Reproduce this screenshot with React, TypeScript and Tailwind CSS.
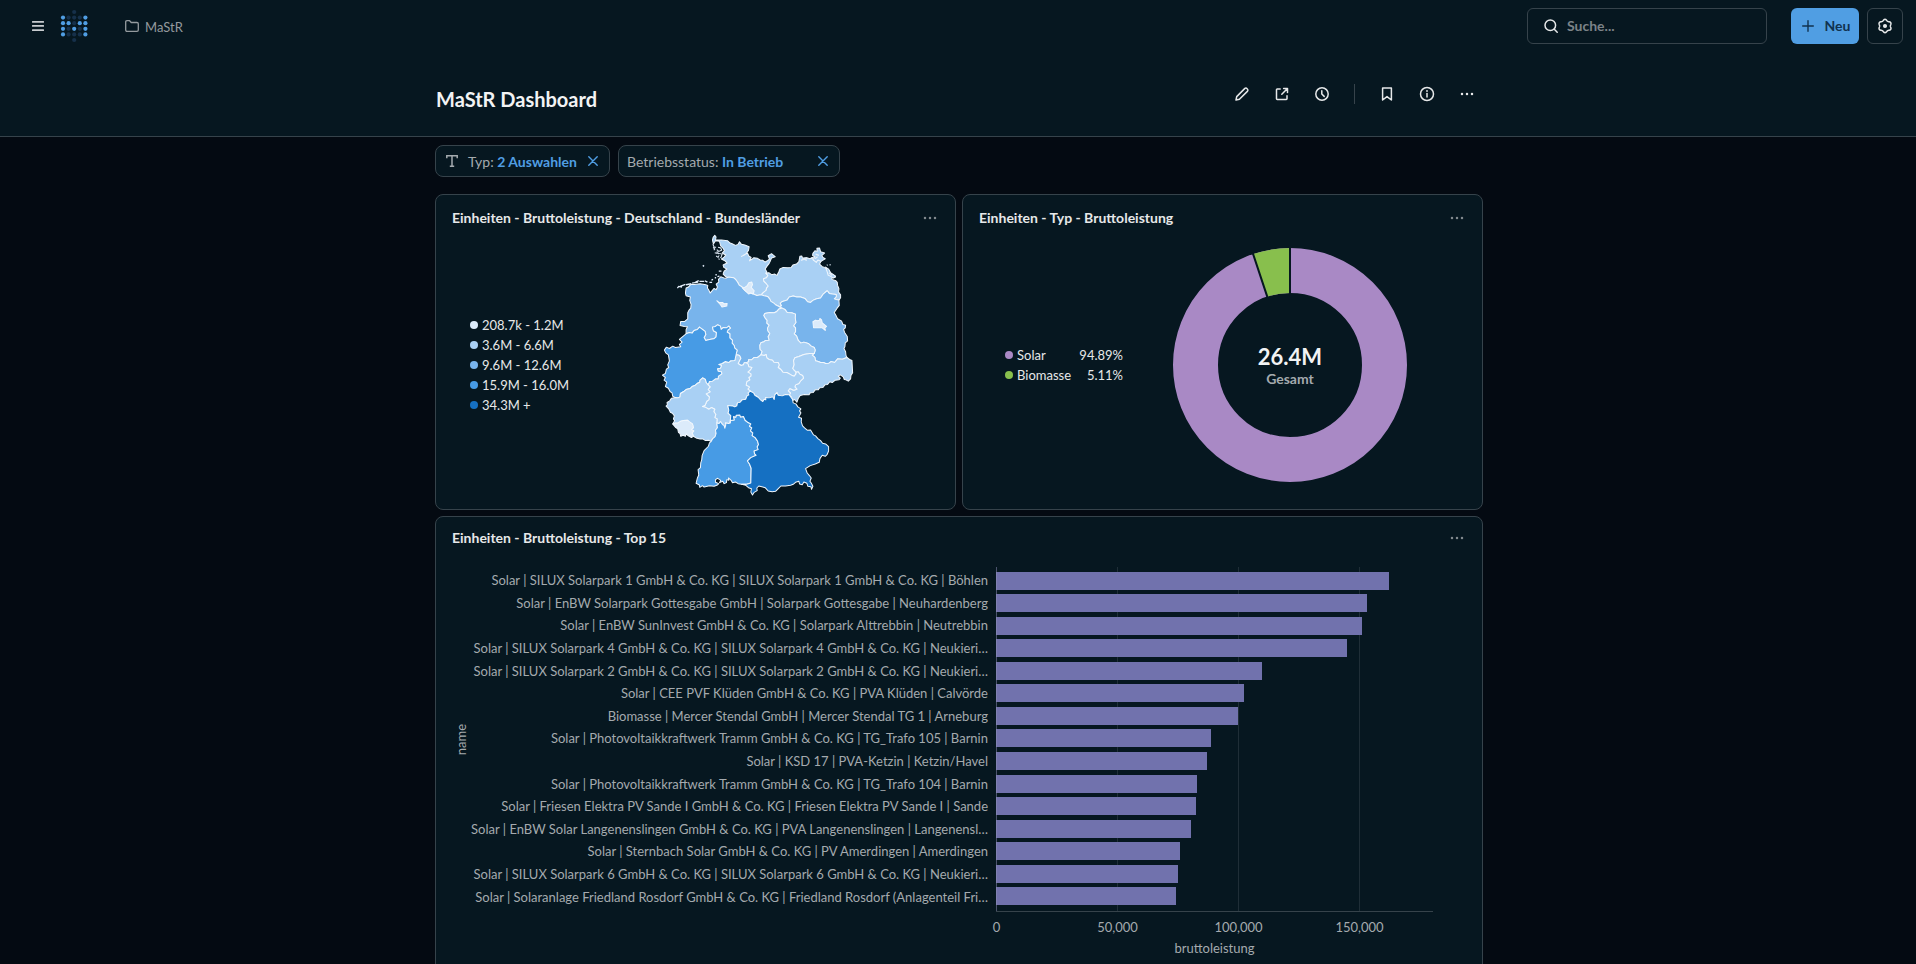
import React from "react";

type Pt = [number, number];

function arc(s: string): Pt[] {
  return s.split(" ").map((p) => p.split(",").map(Number) as Pt);
}

/* Border lines of the federal states, shared between neighbours. */
const arcs: Record<string, Pt[]> = {
  shCoast: arc(
    "250,157 240,158 228,155 219,146 222,137 230,131 221,126 219,119 231,113 224,106 214,101 222,95 227,89 216,83 223,76 219,69 212,62 208,48 196,46 190,56 187,44 189,36 194,30 198,35 196,44 214,44 232,46 240,53 246,55 256,60 264,57 268,49 274,57 284,59 297,64 295,75 287,86 274,93 284,88 292,83 296,92 303,96 298,106 306,101 311,97 322,99 330,104 338,105 345,110 353,105 358,101 354,91 364,85 375,94 364,98 360,108 357,114 350,123 345,131 350,140 347,143",
  ),
  shMv: arc("347,143 353,150 349,157 340,160 341,167 347,173 354,182 349,188 348,195 340,201 333,208"),
  shNi: arc("250,157 257,163 262,170 267,179 275,184 284,195 298,203 310,206 320,210 333,208"),
  niMv: arc("333,208 342,211 352,213 359,221 362,228 371,233 376,238 388,244"),
  mvCoast: arc(
    "347,143 356,142 364,148 374,146 380,150 386,139 389,131 399,126 412,127 423,126 428,119 439,116 446,109 449,93 455,92 457,99 470,97 479,100 486,96 490,104 498,108 503,102 513,106 508,116 516,124 524,126 531,134 538,138 541,147 551,150 556,155 545,158 545,162 557,166 561,171 562,180 566,190 565,200 571,208 571,217 566,224",
  ),
  mvBb: arc("388,244 394,241 390,233 397,228 411,224 417,215 429,212 440,215 451,215 464,219 472,229 481,231 488,225 499,220 511,218 518,207 531,196 537,204 546,206 558,207 558,214 552,220 558,222 566,224"),
  niBb: arc("388,244 396,248"),
  niSt: arc("396,248 386,251 380,258 372,262 358,261 344,264 341,270 346,279 351,285 350,293 357,299 352,308 353,316 359,324 354,334 357,344 346,345 341,349 332,352 329,360 330,372 336,378 332,388"),
  stBb: arc("396,248 404,252 411,261 424,262 436,266 435,277 437,291 430,301 436,307 436,318 432,325 439,331 444,345 452,353 461,350 474,354 483,362 492,366 495,374 492,384"),
  bbEast: arc("566,224 567,240 560,249 552,261 558,272 562,280 574,287 578,297 586,299 585,307 580,312 583,321 591,333 592,346 585,352 584,363 581,369 586,379 587,389 590,396"),
  bbSn: arc("492,384 486,389 494,396 496,406 504,408 511,411 520,411 526,414 536,413 543,408 553,411 562,400 576,401 590,396"),
  snEast: arc(
    "590,396 598,402 605,405 607,442 602,450 601,460 594,467 587,463 582,462 579,454 570,448 564,452 570,458 566,463 555,464 546,471 538,469 532,477 524,478 518,486 508,487 504,493 495,493 489,501 480,502 476,508 462,507 450,510 444,519 440,530 433,522 427,525 424,515 417,508",
  ),
  snTh: arc("417,508 421,503 414,496 419,489 430,494 440,491 434,484 436,478 446,474 452,465 460,458 457,450 449,446 444,439 438,440 437,446"),
  snSt: arc("437,446 438,440 432,434 428,429 432,417 430,406 434,397 446,393 461,387 478,384 492,384"),
  stTh: arc("332,388 342,390 348,387 350,397 357,402 367,404 371,410 384,411 387,418 384,426 392,432 398,440 410,441 424,449 432,452 437,446"),
  niTh: arc("332,388 322,396 312,396 304,403 295,403 296,409 288,412"),
  heTh: arc("288,412 294,416 296,424 305,426 300,434 293,440 302,445 302,452 296,456 299,463 290,468 288,479 298,484 293,491 301,497"),
  thBy: arc("301,497 310,502 314,509 324,515 330,522 338,528 342,521 347,523 346,516 357,517 368,514 372,522 374,508 380,501 384,509 396,511 406,507 417,508"),
  niHe: arc("258,387 268,390 272,398 268,406 264,414 273,420 280,418 282,412 288,412"),
  niNrw: arc("108,325 118,321 126,323 132,315 142,312 148,305 157,312 165,318 167,327 162,336 167,345 178,342 191,340 198,334 199,321 190,316 187,305 196,303 202,298 211,302 213,312 220,306 229,307 236,302 241,308 234,313 231,320 239,325 239,337 247,345 246,353 252,360 254,368 261,374 258,387"),
  niCoast: arc(
    "250,157 236,155 225,159 212,154 205,162 206,170 198,176 202,185 198,193 192,189 185,197 180,203 176,194 172,188 173,180 167,178 150,175 133,177 122,177 115,185 108,188 106,203 108,211 121,215 119,225 123,237 122,248 117,254 113,262 113,280 104,288 92,288 90,300 103,303 112,304 108,313 108,325",
  ),
  nrwWest: arc("108,325 97,334 88,342 96,350 88,357 92,364 76,366 68,362 58,369 49,365 43,374 47,382 55,388 58,406 53,418 56,426 49,431 46,444 37,449 46,456 42,464 50,470 46,483 55,488 60,498 66,502 68,512 77,517 84,517"),
  nrwRp: arc("84,517 90,514 91,504 101,498 108,492 120,489 126,483 134,480 141,474 149,470 150,464 158,457 166,462 168,471 174,478"),
  nrwHe: arc("174,478 178,468 187,467 196,460 204,460 205,452 215,445 214,439 204,437 202,430 211,428 214,420 206,417 216,414 226,408 236,411 241,406 254,405 256,396 258,387"),
  heRp: arc("174,478 180,484 174,492 180,499 168,505 178,515 176,523 170,527 165,539 157,543 168,546 176,551 184,546 194,551 191,558 197,567 194,576 201,580 200,592"),
  rpWest: arc("84,517 77,516 64,518 59,526 51,531 52,538 48,542 56,550 61,560 67,563 73,571 70,580 74,585 68,595"),
  saarRp: arc("68,595 77,592 82,593 90,588 100,585 112,584 118,589 127,595 130,606 124,612 131,616 126,622 130,632"),
  saarWest: arc("68,595 76,605 83,610 85,620 90,624 92,632 99,629 106,632 108,625 115,631 124,636 130,632"),
  rpSouth: arc("130,632 138,637 150,640 158,640 166,645 176,644 183,648"),
  rpBw: arc("183,648 188,639 195,633 198,623 196,614 202,606 200,592"),
  heBw: arc("200,592 207,594 211,588 217,597 222,600 224,608 227,598 226,592 236,594 240,592"),
  heBy: arc("240,592 241,580 242,570 234,563 236,554 233,540 247,541 254,544 260,541 262,532 270,530 276,523 287,521 290,512 296,508 294,502 301,497"),
  bwBy: arc("240,592 241,585 252,583 250,573 257,575 258,569 269,568 271,574 280,573 285,584 294,591 302,595 298,602 305,607 301,616 308,622 306,630 315,636 322,646 325,657 321,664 324,672 312,676 313,684 318,689 302,696 292,706 298,715 303,728 302,772 290,776 274,776"),
  bwWest: arc(
    "183,648 178,652 175,662 162,675 156,690 155,702 152,712 151,726 144,732 146,748 142,757 138,773 148,778 149,785 157,780 162,784 178,780 192,782 202,778 206,774 196,770 196,762 203,758 212,764 208,771 218,767 222,774 229,771 230,762 236,764 235,757 243,764 247,771 256,769 264,774 274,776",
  ),
  bySouth: arc(
    "274,776 287,779 295,786 304,789 302,799 307,808 312,800 321,795 320,787 326,781 338,784 345,786 354,796 366,798 376,797 385,788 392,781 406,781 421,779 429,776 436,770 446,767 448,775 456,777 461,769 470,773 473,782 482,783 484,791 488,782 483,772 479,767 483,757 477,749 471,742 466,729 480,720 495,715 507,710 509,699 516,689 525,692 531,686 535,676 535,663 526,655 517,653 511,645 503,639 496,631 490,628 481,613 471,614 463,607 457,601 453,589 454,578 445,575 452,562 448,556 452,550 443,544 437,535 429,532 427,522 417,508",
  ),
};

type Step = string; // a leading "-" walks the line backwards

function outline(steps: Step[]): string {
  const pts = steps.flatMap((s) => (s[0] === "-" ? [...arcs[s.slice(1)]].reverse() : arcs[s]));
  return "M" + pts.map((p) => p.join(" ")).join("L") + "Z";
}

const C1 = "#dcebfa";
const C2 = "#a9d0f4";
const C3 = "#78b4ec";
const C4 = "#479be5";
const C5 = "#1570c2";

const states: { name: string; fill: string; steps: Step[] }[] = [
  { name: "Schleswig-Holstein", fill: C2, steps: ["shCoast", "shMv", "-shNi"] },
  { name: "Mecklenburg-Vorpommern", fill: C2, steps: ["mvCoast", "-mvBb", "-niMv", "-shMv"] },
  { name: "Niedersachsen", fill: C3, steps: ["shNi", "niMv", "niBb", "niSt", "niTh", "-niHe", "-niNrw", "-niCoast"] },
  { name: "Brandenburg", fill: C3, steps: ["mvBb", "bbEast", "-bbSn", "-stBb", "-niBb"] },
  { name: "Sachsen-Anhalt", fill: C2, steps: ["stBb", "-snSt", "-stTh", "-niSt"] },
  { name: "Sachsen", fill: C2, steps: ["snSt", "bbSn", "snEast", "snTh"] },
  { name: "Thüringen", fill: C2, steps: ["stTh", "-snTh", "-thBy", "-heTh", "-niTh"] },
  { name: "Hessen", fill: C2, steps: ["niHe", "heTh", "-heBy", "-heBw", "-heRp", "nrwHe"] },
  { name: "Nordrhein-Westfalen", fill: C4, steps: ["niNrw", "-nrwHe", "-nrwRp", "-nrwWest"] },
  { name: "Rheinland-Pfalz", fill: C2, steps: ["nrwRp", "heRp", "-rpBw", "-rpSouth", "-saarRp", "-rpWest"] },
  { name: "Saarland", fill: C1, steps: ["saarRp", "-saarWest"] },
  { name: "Baden-Württemberg", fill: C4, steps: ["rpBw", "heBw", "bwBy", "-bwWest"] },
  { name: "Bayern", fill: C5, steps: ["heBy", "thBy", "-bySouth", "-bwBy"] },
];

function GermanyMap() {
  return (
    <svg viewBox="30 20 590 800" className="mt-[3px] h-[267px] w-[197px]" role="img" aria-label="Deutschland">
      <g stroke="#f1f7fd" strokeWidth="3" strokeLinejoin="round">
        {states.map((s) => (
          <path key={s.name} d={outline(s.steps)} fill={s.fill} />
        ))}
        <g fill={C1}>
          <path d="M276 187L284 186L291 181L296 172L305 170L307 178L303 186L312 196L309 206L300 202L296 206L287 198Z" />
          <path d="M200 226L207 231L217 231L222 235L231 234L230 242L216 245L211 238Z" />
          <path d="M488 289L496 284L502 286L508 284L509 279L514 283L516 292L529 303L524 307L525 315L516 307L490 307Z" />
        </g>
        <g fill={C2} strokeWidth="3">
          <path d="M488 84L494 76L501 78L500 69L508 68L511 79L523 83L515 90L518 96L525 100L512 108L503 104L498 111L488 103L494 94L487 90Z" />
          <path d="M526 125L535 131L541 142L556 152L550 158L540 152L534 150L531 140Z" />
        </g>
      </g>
      <g fill="none" stroke="#e3eefa" strokeWidth="4">
        <path d="M82 188l4-5 10 2M90 183l16-6M108 178l16-3M126 173l18-3M136 170l10-4M148 168l14 0M164 166l8 4M178 171l8 0M184 164l5-2M194 157l4 0M196 148l4 0M202 154l6-2M206 137l8 0M158 120l4 3" />
        <path d="M188 57l4 8 6 1M189 66l5 5-3 3M204 66l8 2 3 8M200 73l6 5 10-4M194 82l7 2 0-6M198 92l6 4 3-6M208 84l8 3-3 8M203 82l4 4M210 96l6 3M205 100l4 2" strokeWidth="3" />
        <path d="M452 105l10-4 8 4M482 100l10-6M494 100l8-6M530 120l2-2M538 118l3 0M496 86l10 4M536 142l10 8M458 99l12-1" />
      </g>
    </svg>
  );
}

function Logo() {
  const rows = ["  .  ", "#...#", "##.##", "#.#.#", "#...#", "  .  "];
  return (
    <svg viewBox="0 0 28 34" className="h-[34px] w-7" aria-hidden="true">
      {rows.flatMap((r, y) =>
        [...r].map((c, x) =>
          c === " " ? null : (
            <circle
              key={x + "-" + y}
              cx={3 + x * 5.6}
              cy={3 + y * 5.6}
              r="2.1"
              fill={c === "#" ? "#509ee3" : "#16304a"}
            />
          ),
        ),
      )}
    </svg>
  );
}

/* Six-lobed cog outline. */
const cogPath =
  "M" +
  Array.from({ length: 72 }, (_, i) => {
    const t = (i * Math.PI) / 36;
    const r = 6 + 0.65 * Math.cos(6 * t);
    return (8 + r * Math.sin(t)).toFixed(2) + " " + (8 - r * Math.cos(t)).toFixed(2);
  }).join("L") +
  "Z";

function Dots({ className }: { className: string }) {
  return (
    <svg viewBox="0 0 16 16" className={className} fill="currentColor" aria-hidden="true">
      <circle cx="3" cy="8" r="1.25" />
      <circle cx="8" cy="8" r="1.25" />
      <circle cx="13" cy="8" r="1.25" />
    </svg>
  );
}

function Icon({ children }: { children: React.ReactNode }) {
  return (
    <svg
      viewBox="0 0 16 16"
      className="size-4"
      fill="none"
      stroke="currentColor"
      strokeWidth="1.5"
      strokeLinecap="round"
      strokeLinejoin="round"
      aria-hidden="true"
    >
      {children}
    </svg>
  );
}

function ToolButton({ label, children }: { label: string; children: React.ReactNode }) {
  return (
    <button aria-label={label} className="flex size-8 items-center justify-center">
      {children}
    </button>
  );
}

function Card({
  title,
  className,
  headerClassName = "pt-3",
  children,
}: {
  title: string;
  className: string;
  headerClassName?: string;
  children: React.ReactNode;
}) {
  return (
    <section className={"flex flex-col rounded-lg border border-[#36434b] bg-[#061720] " + className}>
      <header className={"flex items-center justify-between pr-[17px] pl-4 " + headerClassName}>
        <h2 className="text-sm leading-[22px] font-bold text-[#e6e8e9]">{title}</h2>
        <button aria-label="Menü" className="text-[#81898e]">
          <Dots className="size-4" />
        </button>
      </header>
      {children}
    </section>
  );
}

function FilterChip({ label, value, className, icon }: { label: string; value: string; className: string; icon?: React.ReactNode }) {
  return (
    <div className={"flex h-8 items-center rounded-lg border border-[#36434b] bg-[#061720] text-sm " + className}>
      {icon}
      <button className="flex-1 pt-px text-left whitespace-nowrap text-[#a4aaae]">
        {label}: <span className="font-bold text-[#509ee3]">{value}</span>
      </button>
      <button aria-label={label + " entfernen"} className="text-[#509ee3]">
        <svg viewBox="0 0 10 10" className="size-2.5" stroke="currentColor" strokeWidth="1.4" strokeLinecap="round" aria-hidden="true">
          <path d="M.8 .8L9.2 9.2M9.2 .8L.8 9.2" />
        </svg>
      </button>
    </div>
  );
}

const mapLegend: [string, string][] = [
  ["bg-[#dcebfa]", "208.7k - 1.2M"],
  ["bg-[#a9d0f4]", "3.6M - 6.6M"],
  ["bg-[#78b4ec]", "9.6M - 12.6M"],
  ["bg-[#479be5]", "15.9M - 16.0M"],
  ["bg-[#1570c2]", "34.3M +"],
];

function Donut() {
  const a = (-0.0511 * 360 * Math.PI) / 180;
  const at = (r: number) => `${117 + r * Math.sin(a)} ${117 - r * Math.cos(a)}`;
  return (
    <svg viewBox="0 0 234 234" className="col-start-1 row-start-1 size-[234px]" aria-hidden="true">
      <circle cx="117" cy="117" r="94.5" fill="none" stroke="#a989c5" strokeWidth="45" />
      <path d={`M117 0A117 117 0 0 0 ${at(117)}L${at(72)}A72 72 0 0 1 117 45Z`} fill="#88bf4d" />
      <path d={`M117 -2V47M${at(119)}L${at(70)}`} stroke="#061720" strokeWidth="2" />
    </svg>
  );
}

const bars: [string, number][] = [
  ["Solar | SILUX Solarpark 1 GmbH & Co. KG | SILUX Solarpark 1 GmbH & Co. KG | Böhlen", 162300],
  ["Solar | EnBW Solarpark Gottesgabe GmbH | Solarpark Gottesgabe | Neuhardenberg", 153200],
  ["Solar | EnBW SunInvest GmbH & Co. KG | Solarpark Alttrebbin | Neutrebbin", 151200],
  ["Solar | SILUX Solarpark 4 GmbH & Co. KG | SILUX Solarpark 4 GmbH & Co. KG | Neukieri…", 144900],
  ["Solar | SILUX Solarpark 2 GmbH & Co. KG | SILUX Solarpark 2 GmbH & Co. KG | Neukieri…", 109800],
  ["Solar | CEE PVF Klüden GmbH & Co. KG | PVA Klüden | Calvörde", 102400],
  ["Biomasse | Mercer Stendal GmbH | Mercer Stendal TG 1 | Arneburg", 99900],
  ["Solar | Photovoltaikkraftwerk Tramm GmbH & Co. KG | TG_Trafo 105 | Barnin", 88800],
  ["Solar | KSD 17 | PVA-Ketzin | Ketzin/Havel", 87100],
  ["Solar | Photovoltaikkraftwerk Tramm GmbH & Co. KG | TG_Trafo 104 | Barnin", 83000],
  ["Solar | Friesen Elektra PV Sande I GmbH & Co. KG | Friesen Elektra PV Sande I | Sande", 82600],
  ["Solar | EnBW Solar Langenenslingen GmbH & Co. KG | PVA Langenenslingen | Langenensl…", 80500],
  ["Solar | Sternbach Solar GmbH & Co. KG | PV Amerdingen | Amerdingen", 76000],
  ["Solar | SILUX Solarpark 6 GmbH & Co. KG | SILUX Solarpark 6 GmbH & Co. KG | Neukieri…", 75100],
  ["Solar | Solaranlage Friedland Rosdorf GmbH & Co. KG | Friedland Rosdorf (Anlagenteil Fri…", 74300],
];

function BarPlot() {
  const scale = 121.1 / 50000;
  return (
    <svg viewBox="0 0 437 345" className="block h-[345px] w-[437px]" shapeRendering="crispEdges" aria-hidden="true">
      <g fill="#1f2e37">
        {[121, 242, 363].map((x) => (
          <rect key={x} x={x} y="0" width="1" height="344" />
        ))}
      </g>
      {bars.map(([name, v], i) => (
        <rect key={name} x="0" y={Math.floor(5 + i * 22.57)} width={Math.round(v * scale)} height="18" fill="#7172ad" />
      ))}
      <rect x="0" y="0" width="1" height="344" fill="#8f90b8" opacity=".5" />
      <rect x="0" y="344" width="437" height="1" fill="#36434b" />
    </svg>
  );
}

export default function App() {
  return (
    <div className="flex h-screen flex-col overflow-hidden bg-[#040a12] font-['Lato',sans-serif] text-[#e6e8e9]">
      <nav className="flex h-[52px] shrink-0 items-center bg-[#061720] pr-[13px] pl-8">
        <button aria-label="Seitenleiste" className="mr-4">
          <svg viewBox="0 0 12 10" className="h-2.5 w-3" fill="#c8cccf" aria-hidden="true">
            <rect y="0" width="12" height="1.7" rx=".5" />
            <rect y="4.1" width="12" height="1.7" rx=".5" />
            <rect y="8.2" width="12" height="1.7" rx=".5" />
          </svg>
        </button>
        <a href="#" aria-label="Startseite">
          <Logo />
        </a>
        <a href="#" className="ml-[37px] flex items-center gap-1.5 text-[13px] leading-5 text-[#949a9e]">
          <svg viewBox="0 0 14 12" className="h-3 w-3.5" fill="none" stroke="currentColor" strokeWidth="1.3" strokeLinejoin="round" aria-hidden="true">
            <path d="M.7 2Q.7.7 2 .7H4.6L6.2 2.5H12Q13.3 2.5 13.3 3.8V10Q13.3 11.3 12 11.3H2Q.7 11.3.7 10Z" />
          </svg>
          <span className="pt-px">MaStR</span>
        </a>
        <div className="flex-1" />
        <div className="flex h-9 w-60 items-center gap-[9px] rounded-md border border-[#36434b] pl-4">
          <svg viewBox="0 0 14 14" className="size-3.5" fill="none" stroke="#e6e8e9" strokeWidth="1.5" strokeLinecap="round" aria-hidden="true">
            <circle cx="6.3" cy="6.3" r="5.3" />
            <path d="M10.3 10.3L13.2 13.2" />
          </svg>
          <input
            type="search"
            aria-label="Suche"
            placeholder="Suche..."
            className="min-w-0 flex-1 bg-transparent text-sm font-bold outline-none placeholder:text-[#7c8388]"
          />
        </div>
        <button className="ml-6 flex h-9 w-17 items-center justify-center gap-[11px] rounded-md bg-[#509ee3] pl-0.5 text-sm font-bold text-[#10324f]">
          <svg viewBox="0 0 12 12" className="size-3" stroke="currentColor" strokeWidth="1.4" strokeLinecap="round" aria-hidden="true">
            <path d="M6 .7V11.3M.7 6H11.3" />
          </svg>
          Neu
        </button>
        <button aria-label="Einstellungen" className="ml-2 flex size-9 items-center justify-center rounded-md border border-[#36434b]">
          <Icon>
            <path d={cogPath} />
            <circle cx="8" cy="8" r="1.3" fill="currentColor" />
          </Icon>
        </button>
      </nav>

      <header className="h-[85px] shrink-0 border-b border-[#36434b] bg-[#061720] pl-0.5">
        <div className="mx-auto flex max-w-[1048px] justify-between pt-[26px]">
          <h1 className="pt-[7px] pl-px text-xl leading-7 font-bold text-[#f2f3f4]">MaStR Dashboard</h1>
          <div className="flex h-8 items-center gap-2">
            <ToolButton label="Bearbeiten">
              <Icon>
                <path d="M2 14L2.7 10.6L10.9 2.4Q12 1.5 13.2 2.8Q14.5 4 13.6 5.1L5.4 13.3Z" />
              </Icon>
            </ToolButton>
            <ToolButton label="Teilen">
              <Icon>
                <path d="M6.2 3H3.2Q2.5 3 2.5 3.7V12.8Q2.5 13.5 3.2 13.5H12.3Q13 13.5 13 12.8V9.8M9.6 2.5H13.5V6.4M13.2 2.8L7.8 8.2" />
              </Icon>
            </ToolButton>
            <ToolButton label="Zeit">
              <Icon>
                <circle cx="8" cy="8" r="6.2" />
                <path d="M7.8 4.8V8L10.2 10.4" />
              </Icon>
            </ToolButton>
            <div className="mx-2 h-5 w-px bg-[#36434b]" />
            <ToolButton label="Lesezeichen">
              <Icon>
                <path d="M3.6 2H12.4V14L8 10.6L3.6 14Z" />
              </Icon>
            </ToolButton>
            <ToolButton label="Info">
              <Icon>
                <circle cx="8" cy="8" r="6.5" />
                <path d="M8 7.6V11" />
                <path d="M8 4.9V5" strokeWidth="1.8" />
              </Icon>
            </ToolButton>
            <ToolButton label="Mehr">
              <Dots className="size-4" />
            </ToolButton>
          </div>
        </div>
      </header>

      <main className="pl-0.5">
        <div className="mx-auto flex max-w-[1048px] flex-col">
          <div className="flex gap-2 pt-2">
            <FilterChip
              label="Typ"
              value="2 Auswahlen"
              className="w-[175px] pr-[11px] pl-2.5"
              icon={
                <svg viewBox="0 0 12 12" className="mr-2.5 h-3 w-3" fill="none" stroke="#a4aaae" strokeWidth="1.5" aria-hidden="true">
                  <path d="M.8 3.2V.8H11.2V3.2M6 .8V11.2M3.8 11.2H8.2" />
                </svg>
              }
            />
            <FilterChip label="Betriebsstatus" value="In Betrieb" className="w-[222px] pr-[11px] pl-2" />
          </div>

          <div className="mt-[17px] grid grid-cols-2 gap-1.5">
            <Card title="Einheiten - Bruttoleistung - Deutschland - Bundesländer" className="h-[316px]">
              <div className="flex flex-1 items-start pl-[34px]">
                <ul className="flex w-[190px] flex-col pt-[86px]">
                  {mapLegend.map(([bg, text]) => (
                    <li key={text} className="flex h-5 items-center gap-1 text-[13px]">
                      <span className={"size-2 rounded-full " + bg} />
                      <span className="pt-px">{text}</span>
                    </li>
                  ))}
                </ul>
                <GermanyMap />
              </div>
            </Card>

            <Card title="Einheiten - Typ - Bruttoleistung" className="h-[316px]">
              <div className="flex flex-1 items-start pl-[42px]">
                <ul className="flex w-[118px] flex-col pt-[116px]">
                  {[
                    ["bg-[#a989c5]", "Solar", "94.89%"],
                    ["bg-[#88bf4d]", "Biomasse", "5.11%"],
                  ].map(([bg, name, pct]) => (
                    <li key={name} className="flex h-5 items-center gap-1 text-[13px]">
                      <span className={"size-2 rounded-full " + bg} />
                      <span className="flex-1 pt-px">{name}</span>
                      <span className="pt-px">{pct}</span>
                    </li>
                  ))}
                </ul>
                <div className="mt-[19px] ml-[50px] grid place-items-center">
                  <Donut />
                  <div className="col-start-1 row-start-1 pt-1 text-center font-bold">
                    <div className="text-[22px] leading-6 text-[#f2f3f4]">26.4M</div>
                    <div className="text-sm leading-5 text-[#a4aaae]">Gesamt</div>
                  </div>
                </div>
              </div>
            </Card>

            <Card title="Einheiten - Bruttoleistung - Top 15" className="col-span-2 h-[456px]" headerClassName="pt-2.5">
              <div className="flex pt-[18px] pl-[15px] text-[13px] leading-[22px] text-[#a4aaae]">
                <div className="flex h-[345px] w-5 items-center justify-center">
                  <span className="rotate-180 [writing-mode:vertical-rl]">name</span>
                </div>
                <ul className="flex h-[341px] min-w-0 flex-1 flex-col pt-0.5 pr-2 text-right whitespace-nowrap">
                  {bars.map(([name]) => (
                    <li key={name} className="flex min-h-0 flex-1 items-center justify-end">
                      {name}
                    </li>
                  ))}
                </ul>
                <div className="mr-[49px] w-[437px] shrink-0">
                  <BarPlot />
                  <div className="-ml-[60px] flex pt-1">
                    {["0", "50,000", "100,000", "150,000"].map((t) => (
                      <span key={t} className="w-[121px] shrink-0 text-center">
                        {t}
                      </span>
                    ))}
                  </div>
                  <div className="text-center leading-5">bruttoleistung</div>
                </div>
              </div>
            </Card>
          </div>
        </div>
      </main>
    </div>
  );
}
